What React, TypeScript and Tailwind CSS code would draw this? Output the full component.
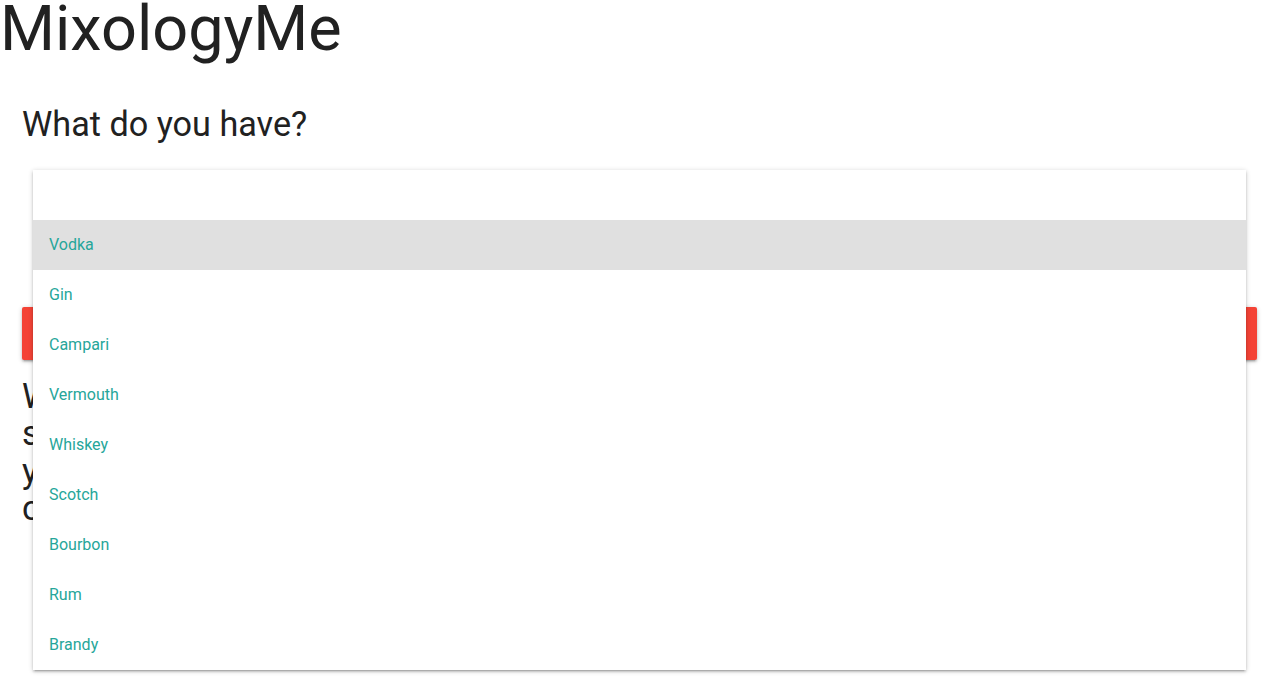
import React from "react";

const spirits = ["", "Vodka", "Gin", "Campari", "Vermouth", "Whiskey", "Scotch", "Bourbon", "Rum", "Brandy"];

export default function App() {
  return (
    <main className="min-h-screen bg-white text-[#212121] font-['Roboto',sans-serif] overflow-hidden">
      {/* Title */}
      <h1 className="text-[63px] leading-[57px] font-normal m-0">MixologyMe</h1>

      <div className="pl-[22px] pr-[14px]">
        <h4 className="text-[34.2px] leading-[37.6px] font-normal mt-[49px]">What do you have?</h4>

        {/* Select with open dropdown */}
        <div className="relative mx-[11px] mt-[26px]">
          <div className="h-[46px] border-b border-[#9e9e9e]" />
          <ul className="absolute top-0 left-0 right-0 z-10 bg-white shadow-[0_2px_2px_0_rgba(0,0,0,0.14),0_3px_1px_-2px_rgba(0,0,0,0.12),0_1px_5px_0_rgba(0,0,0,0.2)]">
            {spirits.map((s, i) => (
              <li
                key={i}
                className={
                  "h-[50px] px-4 flex items-center text-[16px] leading-[22px] text-[#26a69a] " +
                  (i === 1 ? "bg-[#e0e0e0]" : "bg-white")
                }
              >
                {s}
              </li>
            ))}
          </ul>
        </div>

        <button className="mt-[91px] w-full h-[53px] rounded-[2px] bg-[#f44336] text-white text-[15px] uppercase tracking-wide shadow-[0_2px_2px_0_rgba(0,0,0,0.14),0_3px_1px_-2px_rgba(0,0,0,0.12),0_1px_5px_0_rgba(0,0,0,0.2)]">
          Mix it
        </button>

        <h4 className="text-[34.2px] leading-[37.6px] font-normal mt-[18px]">
          <span className="block">Welcome to MixologyMe!</span>
          <span className="block">select what's in your bar and</span>
          <span className="block">you'll get a list of cocktails</span>
          <span className="block">check back often</span>
        </h4>
      </div>
    </main>
  );
}
